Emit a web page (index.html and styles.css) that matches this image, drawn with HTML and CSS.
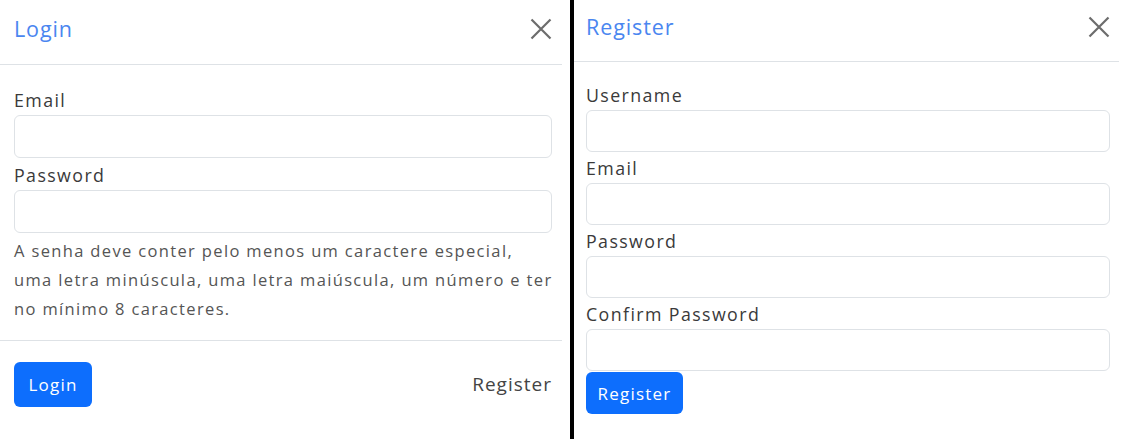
FILE: index.html
```html
<!DOCTYPE html>
<html lang="pt">
<head>
<meta charset="utf-8">
<title>Login / Register</title>
<link rel="stylesheet" href="styles.css">
</head>
<body>
<div class="page">
  <section class="modal modal-login">
    <header class="modal-header">
      <h1 class="modal-title">Login</h1>
      <button class="btn-close" aria-label="Close">
        <svg viewBox="0 0 22 22" width="22" height="22"><path d="M1.5 1.5 L20.5 20.5 M20.5 1.5 L1.5 20.5" stroke="#6c6c6c" stroke-width="2.2" fill="none"/></svg>
      </button>
    </header>
    <div class="modal-body">
      <label class="field-label">Email</label>
      <div class="input"></div>
      <label class="field-label">Password</label>
      <div class="input"></div>
      <p class="help">A senha deve conter pelo menos um caractere especial,<br>uma letra minúscula, uma letra maiúscula, um número e ter<br>no mínimo 8 caracteres.</p>
    </div>
    <footer class="modal-footer">
      <button class="btn-primary btn-login">Login</button>
      <a class="link">Register</a>
    </footer>
  </section>
  <div class="divider"></div>
  <section class="modal modal-register">
    <header class="modal-header reg-header">
      <h1 class="modal-title">Register</h1>
      <button class="btn-close" aria-label="Close">
        <svg viewBox="0 0 22 22" width="22" height="22"><path d="M1.5 1.5 L20.5 20.5 M20.5 1.5 L1.5 20.5" stroke="#6c6c6c" stroke-width="2.2" fill="none"/></svg>
      </button>
    </header>
    <div class="modal-body reg-body">
      <label class="field-label">Username</label>
      <div class="input"></div>
      <label class="field-label">Email</label>
      <div class="input"></div>
      <label class="field-label">Password</label>
      <div class="input"></div>
      <label class="field-label">Confirm Password</label>
      <div class="input"></div>
      <button class="btn-primary btn-register">Register</button>
    </div>
  </section>
</div>
</body>
</html>
```
FILE: styles.css
```css
* { box-sizing: border-box; }
html, body {
  margin: 0;
  padding: 0;
  background: #fff;
}
body {
  font-family: "Open Sans", "Noto Sans", "DejaVu Sans", sans-serif;
  color: #3a3a3a;
  width: 1144px;
  height: 439px;
  overflow: hidden;
}
.page {
  display: flex;
  height: 439px;
}
.modal {
  display: flex;
  flex-direction: column;
}
.modal-login {
  width: 562px;
  margin-right: 8px;
}
.divider {
  width: 4px;
  background: #000;
  height: 100%;
}
.modal-register {
  width: 545px;
}
.modal-header {
  height: 65px;
  display: flex;
  align-items: center;
  justify-content: space-between;
  padding: 0 10px 7px 14px;
  border-bottom: 1px solid #dee2e6;
}
.reg-header {
  height: 62px;
  padding: 0 9px 8px 12px;
}
.modal-title {
  margin: 0;
  font-size: 21.5px;
  font-weight: 400;
  color: #4a86f0;
  letter-spacing: 0.9px;
}
.btn-close {
  border: 0;
  background: transparent;
  padding: 0;
  width: 22px;
  height: 22px;
  display: flex;
}
.modal-body {
  display: flex;
  flex-direction: column;
  padding: 23px 10px 0 14px;
}
.reg-body {
  padding: 21px 9px 0 12px;
}
.field-label {
  font-size: 17.8px;
  line-height: 24px;
  color: #3a3a3a;
  margin-bottom: 3px;
  letter-spacing: 1.4px;
}
.input {
  height: 43px;
  border: 1px solid #dee2e6;
  border-radius: 6px;
  background: #fff;
  margin-bottom: 5px;
}
.reg-body .input {
  height: 42px;
  margin-bottom: 4px;
}
.help {
  margin: 0;
  font-size: 16.5px;
  line-height: 29px;
  color: #555;
  letter-spacing: 1.35px;
  white-space: nowrap;
  margin-top: -2px;
}
.modal-footer {
  margin-top: 17px;
  border-top: 1px solid #dee2e6;
  padding: 21px 10px 0 14px;
  display: flex;
  align-items: center;
  justify-content: space-between;
}
.btn-primary {
  background: #0d6efd;
  color: #fff;
  border: 0;
  border-radius: 6px;
  font-family: inherit;
  font-size: 17px;
  letter-spacing: 1.2px;
}
.btn-login {
  width: 78px;
  height: 45px;
}
.btn-register {
  width: 97px;
  height: 42px;
  margin-top: -3px;
}
.link {
  font-size: 19px;
  color: #444;
  letter-spacing: 1px;
  margin-top: -2px;
}
```
